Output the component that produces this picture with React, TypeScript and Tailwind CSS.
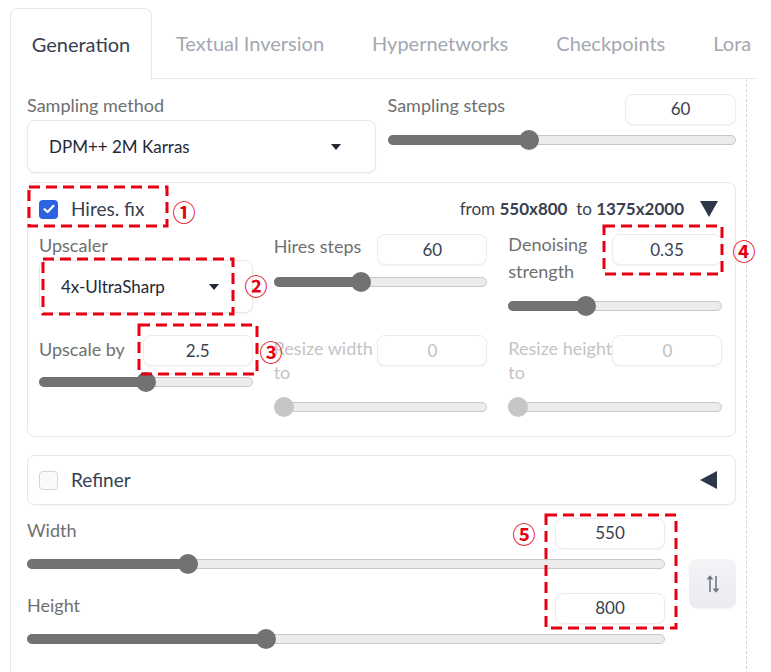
import React from 'react';

const Slider: React.FC<{ p: number; disabled?: boolean }> = ({ p, disabled }) => {
  const pos = `calc(10px + (100% - 20px) * ${p})`;
  return (
    <div className="relative h-[20px] w-full">
      <div className="absolute inset-x-0 top-[5px] h-[10px] rounded-full border border-[#c8c8c8] bg-[#ececec]" />
      {!disabled && (
        <div className="absolute left-0 top-[5px] h-[10px] rounded-full bg-[#727272]" style={{ width: pos }} />
      )}
      <div
        className={
          'absolute top-0 size-[20px] -translate-x-1/2 rounded-full ' +
          (disabled ? 'bg-[#c6c6c6]' : 'bg-[#727272]')
        }
        style={{ left: pos }}
      />
    </div>
  );
};

const NumBox: React.FC<{ value: string; disabled?: boolean; className?: string }> = ({ value, disabled, className }) => (
  <div
    className={
      'flex h-[31px] w-[110px] shrink-0 items-center justify-center rounded-[8px] border border-[#ececec] bg-white text-[17px] shadow-[0_1px_2px_rgba(0,0,0,0.05)] ' +
      (disabled ? 'text-[#c0c0c0] ' : 'text-[#374151] ') +
      (className || '')
    }
  >
    {value}
  </div>
);

const Caret = () => (
  <svg width="10" height="6" viewBox="0 0 10 6">
    <path d="M0 0 L10 0 L5 6 Z" fill="#1f2937" />
  </svg>
);

const Dropdown: React.FC<{ value: string; className?: string }> = ({ value, className }) => (
  <div
    className={
      'flex h-[53px] items-center justify-between rounded-[8px] border border-[#e5e7eb] bg-white pl-[21px] pr-[33px] text-[17px] text-[#1f2937] shadow-[0_1px_2px_rgba(0,0,0,0.05)] ' +
      (className || '')
    }
  >
    <span>{value}</span>
    <Caret />
  </div>
);

const Check: React.FC<{ checked?: boolean }> = ({ checked }) =>
  checked ? (
    <div className="flex size-[19px] items-center justify-center rounded-[4px] bg-[#2b63e0]">
      <svg width="12" height="10" viewBox="0 0 12 10">
        <path d="M1.5 5.2 L4.6 8 L10.5 1.8" stroke="white" strokeWidth="2.2" fill="none" strokeLinecap="round" strokeLinejoin="round" />
      </svg>
    </div>
  ) : (
    <div className="size-[19px] rounded-[4px] border border-[#d4d4d8] bg-[#f9fafb]" />
  );

const Label: React.FC<{ children: React.ReactNode; className?: string }> = ({ children, className }) => (
  <div className={'text-[18px] text-[#6f6f6f] ' + (className || '')}>{children}</div>
);

const tabs = ['Generation', 'Textual Inversion', 'Hypernetworks', 'Checkpoints', 'Lora'];

// red dashed marks drawn on top of the screenshot
const marks = [
  { x: 29, y: 187, w: 138, h: 39 },
  { x: 43, y: 259, w: 190, h: 55 },
  { x: 139, y: 325, w: 118, h: 49 },
  { x: 604, y: 226, w: 118, h: 48 },
  { x: 546, y: 515, w: 130, h: 113 },
];

const numbers = [
  { t: '①', x: 184, y: 211 },
  { t: '②', x: 256, y: 285 },
  { t: '③', x: 271, y: 351 },
  { t: '④', x: 744, y: 250 },
  { t: '⑤', x: 524, y: 533 },
];

const App: React.FC = () => {
  return (
    <div className="relative h-[672px] w-[771px] overflow-hidden bg-white font-['Lato',sans-serif]">
      {/* tabs */}
      <div className="ml-[10px] mt-[8px] flex h-[71px] w-[747px] border-b border-[#e5e7eb]">
        {tabs.map((t, i) => (
          <div
            key={t}
            className={
              'flex shrink-0 items-center whitespace-nowrap text-[20px] ' +
              (i === 0
                ? '-mb-px w-[142px] justify-center rounded-t-[8px] border border-b-0 border-[#e5e7eb] bg-white text-[#374151]'
                : 'px-[24px] text-[#a3a8b1]')
            }
          >
            {t}
          </div>
        ))}
      </div>

      {/* panel */}
      <div className="ml-[10px] h-[600px] w-[737px] border-y-0 border-l border-r border-dashed border-[#e5e7eb] border-r-[#d6d6d6] pl-[16px] pr-[10px] pt-[15px] [border-left-style:solid]">
        <div className="grid grid-cols-2 gap-x-[12px]">
          <div>
            <Label className="-mt-[1px] h-[24px] leading-[24px]">Sampling method</Label>
            <Dropdown value="DPM++ 2M Karras" className="mt-[3px] pr-[34px]" />
          </div>
          <div>
            <div className="flex h-[30px] items-center justify-between">
              <Label className="-mt-[7px]">Sampling steps</Label>
              <NumBox value="60" className="h-[30px] w-[111px]" />
            </div>
            <div className="mt-[6px]">
              <Slider p={0.4} />
            </div>
          </div>
        </div>

        {/* Hires. fix */}
        <div className="mt-[9px] h-[255px] rounded-[8px] border border-[#e5e7eb] pl-[11px] pr-[13px] pt-[13px]">
          <div className="flex h-[26px] items-center">
            <Check checked />
            <span className="ml-[13px] text-[19px] text-[#374151]">Hires. fix</span>
            <span className="ml-auto text-[17px] text-[#374151]">
              from <b className="font-bold">550x800</b>&nbsp; to <b className="font-bold">1375x2000</b>
            </span>
            <svg className="ml-[16px] mr-[4px]" width="18" height="16" viewBox="0 0 18 16">
              <path d="M0 0 L18 0 L9 16 Z" fill="#2d3748" />
            </svg>
          </div>

          <div className="mt-[12px] grid grid-cols-3 gap-x-[21px]">
            <div>
              <Label className="h-[22px] leading-[22px]">Upscaler</Label>
              <Dropdown value="4x-UltraSharp" className="mt-[4px]" />
            </div>
            <div>
              <div className="flex h-[31px] items-center justify-between">
                <Label className="-mt-[7px]">Hires steps</Label>
                <NumBox value="60" />
              </div>
              <div className="mt-[7px]">
                <Slider p={0.4} />
              </div>
            </div>
            <div>
              <div className="flex h-[51px] items-start justify-between">
                <Label className="-mt-[3px] leading-[27px]">
                  Denoising
                  <br />
                  strength
                </Label>
                <NumBox value="0.35" />
              </div>
              <div className="mt-[11px]">
                <Slider p={0.35} />
              </div>
            </div>
          </div>

          <div className="mt-[19px] grid grid-cols-3 gap-x-[21px]">
            <div>
              <div className="flex h-[31px] items-center justify-between">
                <Label className="-mt-[3px]">Upscale by</Label>
                <NumBox value="2.5" />
              </div>
              <div className="mt-[6px]">
                <Slider p={0.5} />
              </div>
            </div>
            <div>
              <div className="flex h-[49px] items-start justify-between">
                <Label className="mt-[1px] whitespace-nowrap leading-[24px] text-[#c4c4c4]">
                  Resize width
                  <br />
                  to
                </Label>
                <NumBox value="0" disabled />
              </div>
              <div className="mt-[13px]">
                <Slider p={0} disabled />
              </div>
            </div>
            <div>
              <div className="relative flex h-[49px] items-start justify-between">
                <Label className="mt-[1px] whitespace-nowrap leading-[24px] text-[#c4c4c4]">
                  Resize height
                  <br />
                  to
                </Label>
                <NumBox value="0" disabled />
              </div>
              <div className="mt-[13px]">
                <Slider p={0} disabled />
              </div>
            </div>
          </div>
        </div>

        {/* Refiner */}
        <div className="mt-[18px] flex h-[50px] items-center rounded-[8px] border border-[#e5e7eb] pl-[11px] pr-[18px] shadow-[0_1px_2px_rgba(0,0,0,0.04)]">
          <Check />
          <span className="ml-[13px] text-[19px] text-[#374151]">Refiner</span>
          <svg className="ml-auto" width="17" height="18" viewBox="0 0 17 18">
            <path d="M17 0 L17 18 L0 9 Z" fill="#2d3748" />
          </svg>
        </div>

        {/* Width / Height */}
        <div className="mt-[13px] flex items-center gap-[24px]">
          <div className="flex-1">
            <div className="flex h-[30px] items-center justify-between">
              <Label className="-mt-[6px]">Width</Label>
              <NumBox value="550" className="h-[30px]" />
            </div>
            <div className="mt-[6px]">
              <Slider p={0.245} />
            </div>
            <div className="mt-[19px] flex h-[30px] items-center justify-between">
              <Label className="-mt-[6px]">Height</Label>
              <NumBox value="800" className="h-[30px]" />
            </div>
            <div className="mt-[6px]">
              <Slider p={0.371} />
            </div>
          </div>
          <div className="flex h-[49px] w-[47px] items-center justify-center rounded-[8px] bg-gradient-to-b from-[#f3f4f6] to-[#e9ebef] shadow-[0_1px_2px_rgba(0,0,0,0.06)]">
            <svg width="14" height="18" viewBox="0 0 14 18">
              <path d="M4 17 V2 M1.5 4.5 L4 1.5 L6.5 4.5" stroke="#6b7280" strokeWidth="1.5" fill="none" />
              <path d="M10 1 V16 M7.5 13.5 L10 16.5 L12.5 13.5" stroke="#6b7280" strokeWidth="1.5" fill="none" />
            </svg>
          </div>
        </div>
      </div>

      {/* annotations */}
      <svg className="pointer-events-none absolute inset-0" width="771" height="672">
        {marks.map((m, i) => (
          <rect key={i} x={m.x} y={m.y} width={m.w} height={m.h} fill="none" stroke="#e60012" strokeWidth="3" strokeDasharray="11 6" />
        ))}
      </svg>
      {numbers.map((n) => (
        <span
          key={n.t}
          className="pointer-events-none absolute -translate-x-1/2 -translate-y-1/2 font-['Noto_Sans_CJK_JP',sans-serif] text-[23px] font-bold leading-none text-[#e60012]"
          style={{ left: n.x, top: n.y }}
        >
          {n.t}
        </span>
      ))}
    </div>
  );
};

export default App;
